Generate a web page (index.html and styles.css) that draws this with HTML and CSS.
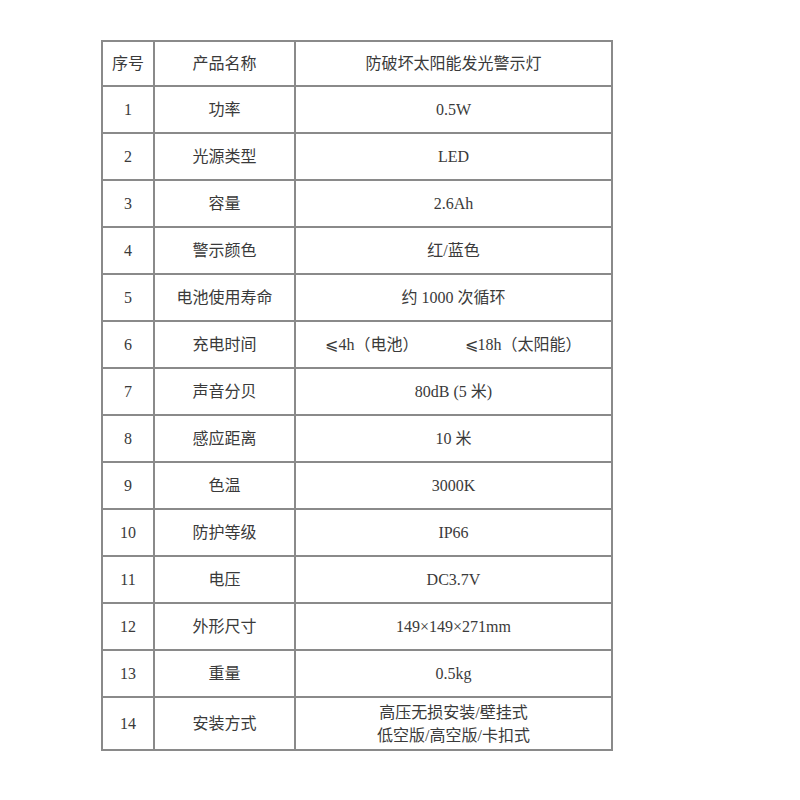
FILE: index.html
```html
<!DOCTYPE html>
<html lang="zh-CN">
<head>
<meta charset="utf-8">
<title>防破坏太阳能发光警示灯</title>
<link rel="stylesheet" href="styles.css">
</head>
<body>
<div class="spec">
  <div class="c">序号</div><div class="c">产品名称</div><div class="c">防破坏太阳能发光警示灯</div>
  <div class="c">1</div><div class="c">功率</div><div class="c">0.5W</div>
  <div class="c">2</div><div class="c">光源类型</div><div class="c">LED</div>
  <div class="c">3</div><div class="c">容量</div><div class="c">2.6Ah</div>
  <div class="c">4</div><div class="c">警示颜色</div><div class="c">红/蓝色</div>
  <div class="c">5</div><div class="c">电池使用寿命</div><div class="c">约 1000 次循环</div>
  <div class="c">6</div><div class="c">充电时间</div><div class="c pair"><span>⩽4h（电池）</span><span>⩽18h（太阳能）</span></div>
  <div class="c">7</div><div class="c">声音分贝</div><div class="c">80dB (5 米)</div>
  <div class="c">8</div><div class="c">感应距离</div><div class="c">10 米</div>
  <div class="c">9</div><div class="c">色温</div><div class="c">3000K</div>
  <div class="c">10</div><div class="c">防护等级</div><div class="c">IP66</div>
  <div class="c">11</div><div class="c">电压</div><div class="c">DC3.7V</div>
  <div class="c">12</div><div class="c">外形尺寸</div><div class="c">149×149×271mm</div>
  <div class="c">13</div><div class="c">重量</div><div class="c">0.5kg</div>
  <div class="c">14</div><div class="c">安装方式</div><div class="c multi">高压无损安装/壁挂式<br>低空版/高空版/卡扣式</div>
</div>
</body>
</html>
```
FILE: styles.css
```css
html, body {
  margin: 0;
  padding: 0;
  background: #ffffff;
}
body {
  font-family: "Liberation Serif", "Noto Sans CJK SC", serif;
  color: #3a3a3a;
}
.spec {
  margin: 40px 0 0 101px;
  width: 510px;
  display: grid;
  grid-template-columns: 52px 141px 317px;
  grid-template-rows: 45px repeat(13, 47px) 53px;
  border-top: 2px solid #8a8a8a;
  border-left: 2px solid #8a8a8a;
}
.c {
  box-sizing: border-box;
  border-right: 2px solid #8a8a8a;
  border-bottom: 2px solid #8a8a8a;
  display: flex;
  align-items: center;
  justify-content: center;
  text-align: center;
  font-size: 16px;
  line-height: 22px;
}
.pair {
  gap: 46px;
}
.multi {
  line-height: 23px;
}
```
